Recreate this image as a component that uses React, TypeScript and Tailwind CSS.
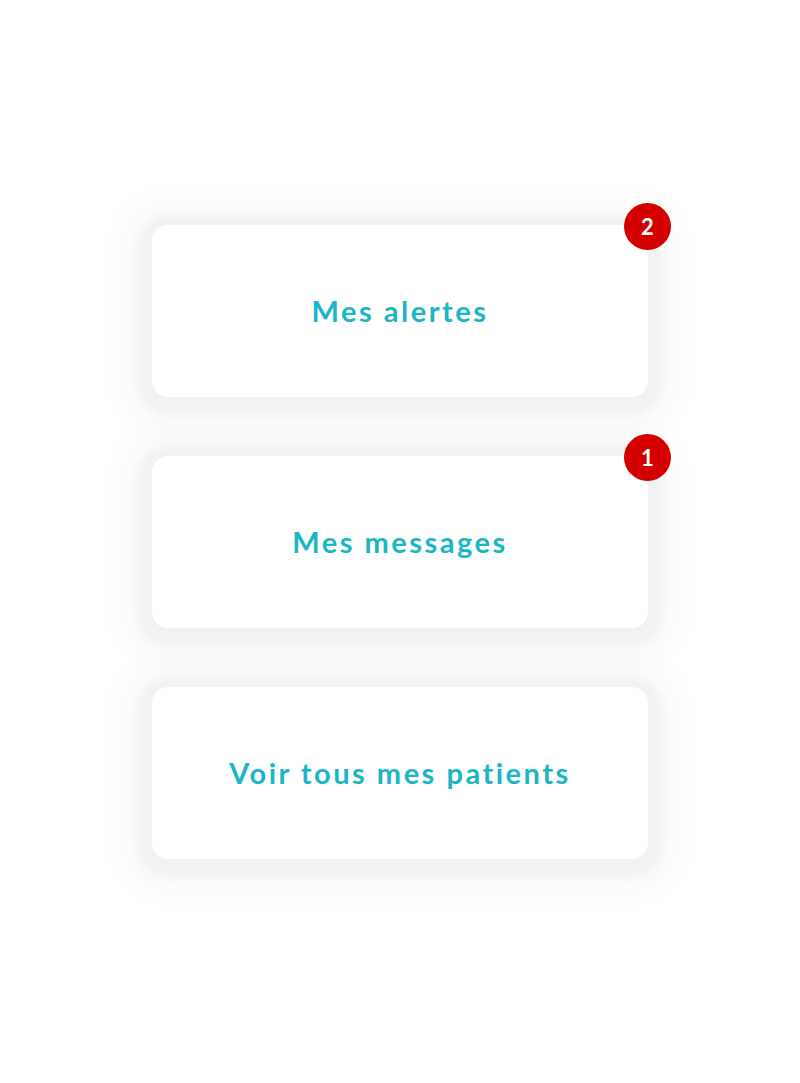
import React from "react";

const items = [
  { label: "Mes alertes", count: 2 },
  { label: "Mes messages", count: 1 },
  { label: "Voir tous mes patients", count: 0 },
];

const font = { fontFamily: "Lato, 'Open Sans', sans-serif" };

function Tile({ label, count }: { label: string; count: number }) {
  return (
    <div className="relative">
      <button className="flex h-[172px] w-[496px] items-center justify-center rounded-[16px] bg-white shadow-[0_4px_10px_14px_rgba(0,0,0,0.035),0_4px_30px_30px_rgba(0,0,0,0.022)]">
        <span className="text-[29px] font-bold tracking-[2.5px] text-[#1ab6c5]" style={font}>
          {label}
        </span>
      </button>
      {count > 0 && (
        <span
          className="absolute -right-[23px] -top-[22px] flex h-[47px] w-[47px] items-center justify-center rounded-full bg-[#d40000] text-[22px] font-bold text-white"
          style={font}
        >
          {count}
        </span>
      )}
    </div>
  );
}

export default function App() {
  return (
    <div className="flex min-h-[1083px] flex-col items-center gap-[59px] bg-white pt-[225px]">
      {items.map((it) => (
        <Tile key={it.label} label={it.label} count={it.count} />
      ))}
    </div>
  );
}
